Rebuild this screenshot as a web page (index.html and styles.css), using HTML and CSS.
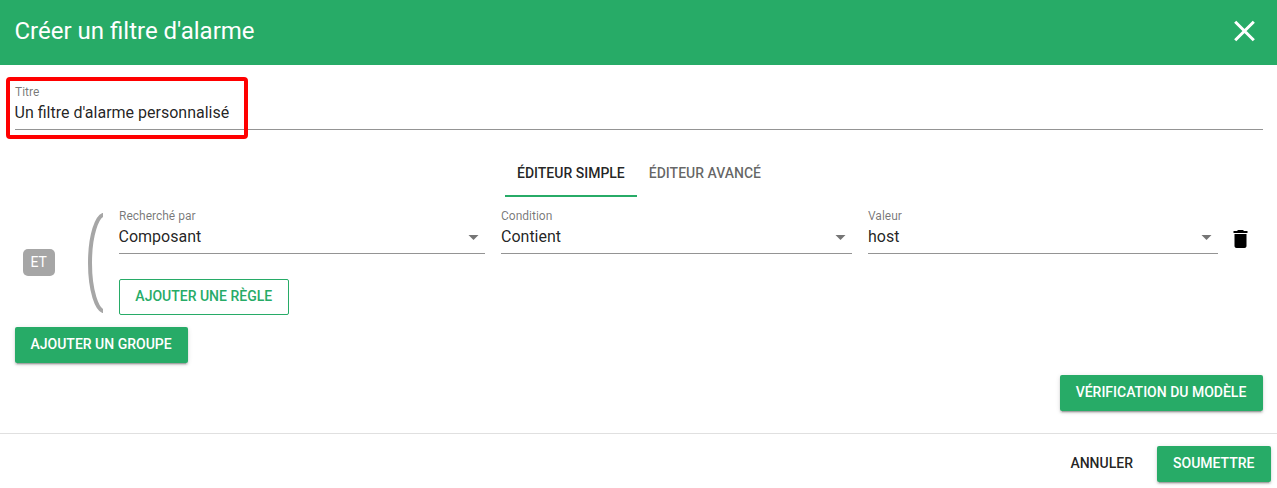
FILE: index.html
```html
<!DOCTYPE html>
<html lang="fr">
<head>
<meta charset="utf-8">
<title>Créer un filtre d'alarme</title>
<link rel="stylesheet" href="styles.css">
</head>
<body>
<div class="dialog">
  <header class="header">
    <h1 class="title">Créer un filtre d'alarme</h1>
    <svg class="close" viewBox="0 0 22 22"><path d="M2.200 1.700 20.800 20.300M20.800 1.700 2.200 20.300"/></svg>
  </header>
  <main class="content">
    <div class="field name-field">
      <span class="label">Titre</span>
      <span class="value">Un filtre d'alarme personnalisé</span>
      <div class="highlight"></div>
    </div>
    <nav class="tabs">
      <span class="tab active">Éditeur simple</span>
      <span class="tab">Éditeur avancé</span>
    </nav>
    <section class="group">
      <span class="operator">ET</span>
      <svg class="bracket" viewBox="0 0 15 100"><path d="M17 1.500A15 48.500 0 0 0 17 98.500"/></svg>
      <div class="rules">
        <div class="rule">
          <div class="field search">
            <span class="label">Recherché par</span>
            <span class="value">Composant</span>
            <svg class="arrow" viewBox="0 0 11 5"><path d="M.5 0h10l-5 5z"/></svg>
          </div>
          <div class="field condition">
            <span class="label">Condition</span>
            <span class="value">Contient</span>
            <svg class="arrow" viewBox="0 0 11 5"><path d="M.5 0h10l-5 5z"/></svg>
          </div>
          <div class="field match">
            <span class="label">Valeur</span>
            <span class="value">host</span>
            <svg class="arrow" viewBox="0 0 11 5"><path d="M.5 0h10l-5 5z"/></svg>
          </div>
          <svg class="trash" viewBox="-.5 0 24 24"><path d="M6 19c0 1.100.9 2 2 2h8c1.100 0 2-.9 2-2V7H6v12zM19 4h-3.500l-1-1h-5l-1 1H5v2h14V4z"/></svg>
        </div>
        <button class="btn outline">Ajouter une règle</button>
      </div>
    </section>
    <button class="btn raised add-group">Ajouter un groupe</button>
    <button class="btn raised check">Vérification du modèle</button>
  </main>
  <footer class="footer">
    <button class="btn flat">Annuler</button>
    <button class="btn raised">Soumettre</button>
  </footer>
</div>
</body>
</html>
```
FILE: styles.css
```css
* { box-sizing: border-box; }
body { margin: 0; background: #fff; color: rgba(0,0,0,.87); font-family: Roboto, sans-serif; }
.dialog { height: 488px; display: flex; flex-direction: column; overflow: hidden; }
.header { height: 65px; flex: none; background: #27ab67; color: #fff; display: flex; justify-content: space-between; padding: 15px 22px 0 14.5px; }
.title { margin: 0; font-size: 24px; line-height: 32px; font-weight: 400; }
.close { width: 22px; height: 22px; margin-top: 5px; fill: none; stroke: #fff; stroke-width: 3; }
.content { height: 368px; flex: none; display: flex; flex-direction: column; padding: 19px 14px 0 15px; }
.field { position: relative; height: 46px; border-bottom: 1px solid #949494; display: flex; flex-direction: column; }
.label { font-size: 12px; line-height: 16px; color: rgba(0,0,0,.54); }
.value { font-size: 16px; line-height: 26px; }
.name-field { flex: none; }
.name-field .value, .search .value { margin-left: -.5px; }
.highlight { position: absolute; left: -9px; top: -7px; width: 242px; height: 62px; border: 4px solid #f00; border-radius: 4px; }
.tabs { height: 48px; flex: none; margin-top: 19px; display: flex; justify-content: center; }
.tab { padding: 0 12px; font-size: 14px; line-height: 48px; font-weight: 500; text-transform: uppercase; color: rgba(0,0,0,.61); border-bottom: 2px solid transparent; }
.active { color: rgba(0,0,0,.87); border-color: #27ab67; }
.group { height: 118px; flex: none; margin-top: 11px; display: flex; }
.operator { width: 32px; height: 27px; margin: 41px 33px 0 8px; padding-right: .5px; border-radius: 5px; background: #a6a6a6; color: #fff; font-size: 14px; line-height: 27px; text-align: center; }
.bracket { width: 15px; height: 100px; margin: 5px 16px 0 0; fill: none; stroke: #a6a6a6; stroke-width: 4; }
.rules { flex: 1; }
.rule { display: flex; }
.search { width: 366px; margin-right: 16px; }
.condition { width: 351px; margin-right: 16px; }
.match { width: 350px; }
.arrow { position: absolute; right: 6px; top: 27px; width: 11px; height: 5px; fill: #757575; }
.trash { width: 24px; height: 24px; margin: 19px 0 0 10px; fill: #000; }
.btn { height: 36px; padding: 0 16px 2px 15.5px; border: 0; border-radius: 2px; background: none; color: inherit; font: 500 14px/34px Roboto, sans-serif; text-transform: uppercase; white-space: nowrap; }
.outline { width: 170px; padding: 0 15.5px 2px 15px; margin-top: 25px; border: 1px solid #27ab67; color: #27ab67; line-height: 32px; }
.raised { background: #27ab67; color: #fff; box-shadow: 0 3px 1px -2px rgba(0,0,0,.2), 0 2px 2px 0 rgba(0,0,0,.14), 0 1px 5px 0 rgba(0,0,0,.12); }
.add-group { width: 173px; align-self: flex-start; flex: none; margin-top: 1px; padding-right: 16.5px; }
.check { width: 203px; align-self: flex-end; flex: none; margin-top: 12px; padding-right: 16.5px; }
.footer { height: 55px; flex: none; border-top: 1px solid #e0e0e0; display: flex; justify-content: flex-end; padding: 12px 6px 0; gap: 8px; }
.footer .raised { width: 114px; }
```
